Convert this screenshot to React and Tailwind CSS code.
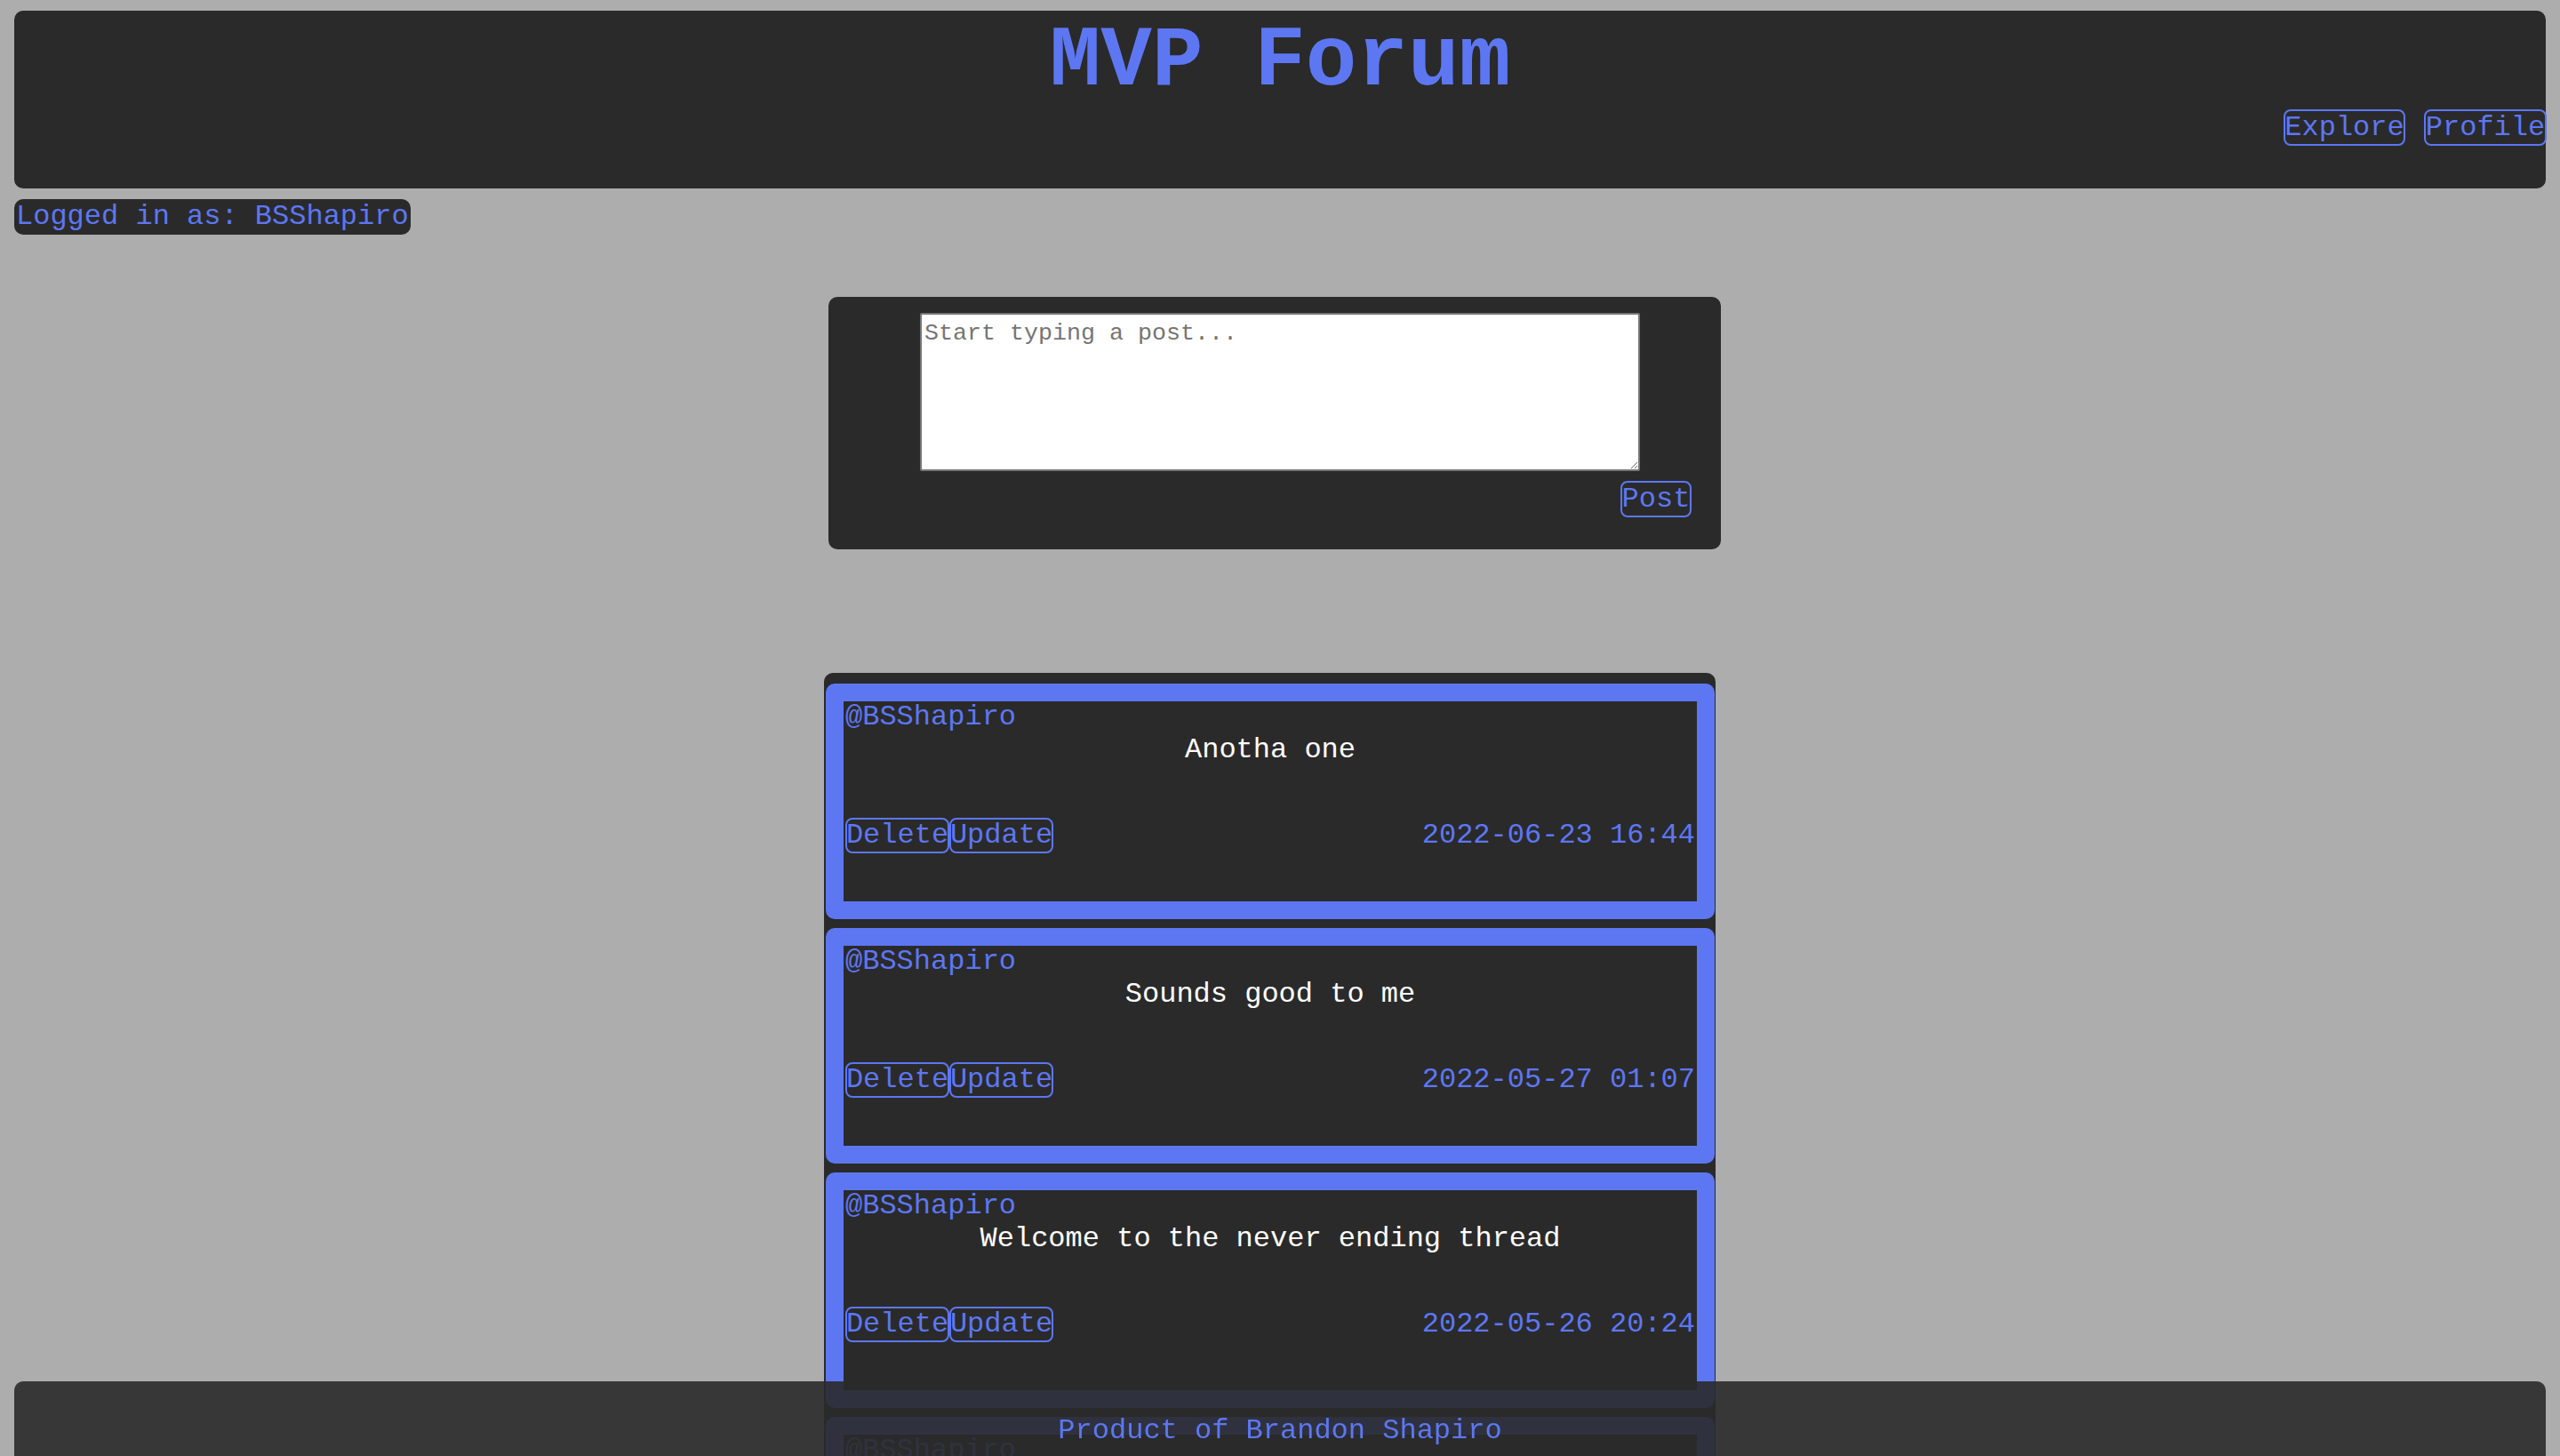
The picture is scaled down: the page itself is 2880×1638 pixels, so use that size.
import React from "react";

const posts = [
  { user: "@BSShapiro", text: "Anotha one", date: "2022-06-23 16:44" },
  { user: "@BSShapiro", text: "Sounds good to me", date: "2022-05-27 01:07" },
  { user: "@BSShapiro", text: "Welcome to the never ending thread", date: "2022-05-26 20:24" },
  { user: "@BSShapiro", text: "First post", date: "2022-05-26 20:20" },
];

function SmallButton({ children }) {
  return (
    <button className="flex h-[40px] w-[117px] items-center justify-center rounded-[8px] border-2 border-[#5d77f2] bg-transparent p-0 text-[32px] leading-normal text-[#5d77f2]">
      {children}
    </button>
  );
}

function Post({ p }) {
  return (
    <div className="rounded-[10px] bg-[#5d77f2] p-[20px]">
      <div className="flex h-[225px] flex-col bg-[#2a2a2a]">
        <div className="pl-[2px] text-[32px] leading-[36px] text-[#5d77f2]">{p.user}</div>
        <div className="text-center text-[32px] leading-[37px] text-white">{p.text}</div>
        <div className="mt-[58px] flex h-[40px] items-start justify-between pl-[2px] pr-[2px]">
          <div className="flex">
            <SmallButton>Delete</SmallButton>
            <SmallButton>Update</SmallButton>
          </div>
          <div className="-mt-[4px] text-[32px] leading-normal text-[#5d77f2]">{p.date}</div>
        </div>
      </div>
    </div>
  );
}

export default function App() {
  return (
    <div
      className="relative h-screen overflow-hidden bg-[#adadad]"
      style={{ fontFamily: '"Liberation Mono", "Courier New", monospace' }}
    >
      <header className="mx-[16px] mt-[12px] h-[200px] rounded-[10px] bg-[#2a2a2a] pt-[14px]">
        <h1 className="text-center text-[96px] font-bold leading-[88px] text-[#5d77f2]">MVP Forum</h1>
        <nav className="-mr-[1px] mt-[9px] flex justify-end gap-[21px]">
          <button className="flex h-[41px] w-[137px] items-center justify-center rounded-[8px] border-2 border-[#5d77f2] bg-transparent p-0 text-[32px] leading-normal text-[#5d77f2]">
            Explore
          </button>
          <button className="flex h-[41px] w-[138px] items-center justify-center rounded-[8px] border-2 border-[#5d77f2] bg-transparent p-0 text-[32px] leading-normal text-[#5d77f2]">
            Profile
          </button>
        </nav>
      </header>

      <div className="ml-[16px] mt-[12px] inline-flex h-[40px] items-center rounded-[10px] bg-[#2a2a2a] px-[2px] text-[32px] leading-normal text-[#5d77f2]">
        Logged in as: BSShapiro
      </div>

      <div className="mt-[70px] flex flex-col items-center">
        <div className="mr-[12px] flex h-[284px] w-[1004px] flex-col rounded-[10px] bg-[#2a2a2a] pt-[18px]">
          <textarea
            placeholder="Start typing a post..."
            className="ml-[103px] block h-[178px] w-[810px] rounded-[2px] border-2 border-[#767676] bg-white px-[3px] py-[1px] text-[26.67px] leading-normal text-black placeholder:text-[#757575]"
          />
          <div className="mt-[11px] flex justify-end pr-[33px]">
            <button className="flex h-[41px] w-[80px] items-center justify-center rounded-[8px] border-2 border-[#5d77f2] bg-transparent p-0 text-[32px] leading-normal text-[#5d77f2]">
              Post
            </button>
          </div>
        </div>

        <div className="mr-[23px] mt-[139px] flex w-[1003px] flex-col gap-[10px] rounded-[10px] bg-[#2a2a2a] pb-[10px] pl-[2px] pr-[1px] pt-[12px]">
          {posts.map((p, i) => (
            <Post key={i} p={p} />
          ))}
        </div>
      </div>

      <footer className="fixed bottom-0 left-[16px] right-[16px] h-[84px] rounded-t-[10px] bg-[rgba(42,42,42,0.9)] pt-[32px] text-center text-[32px] leading-normal text-[#5d77f2]">
        Product of Brandon Shapiro
      </footer>
    </div>
  );
}
